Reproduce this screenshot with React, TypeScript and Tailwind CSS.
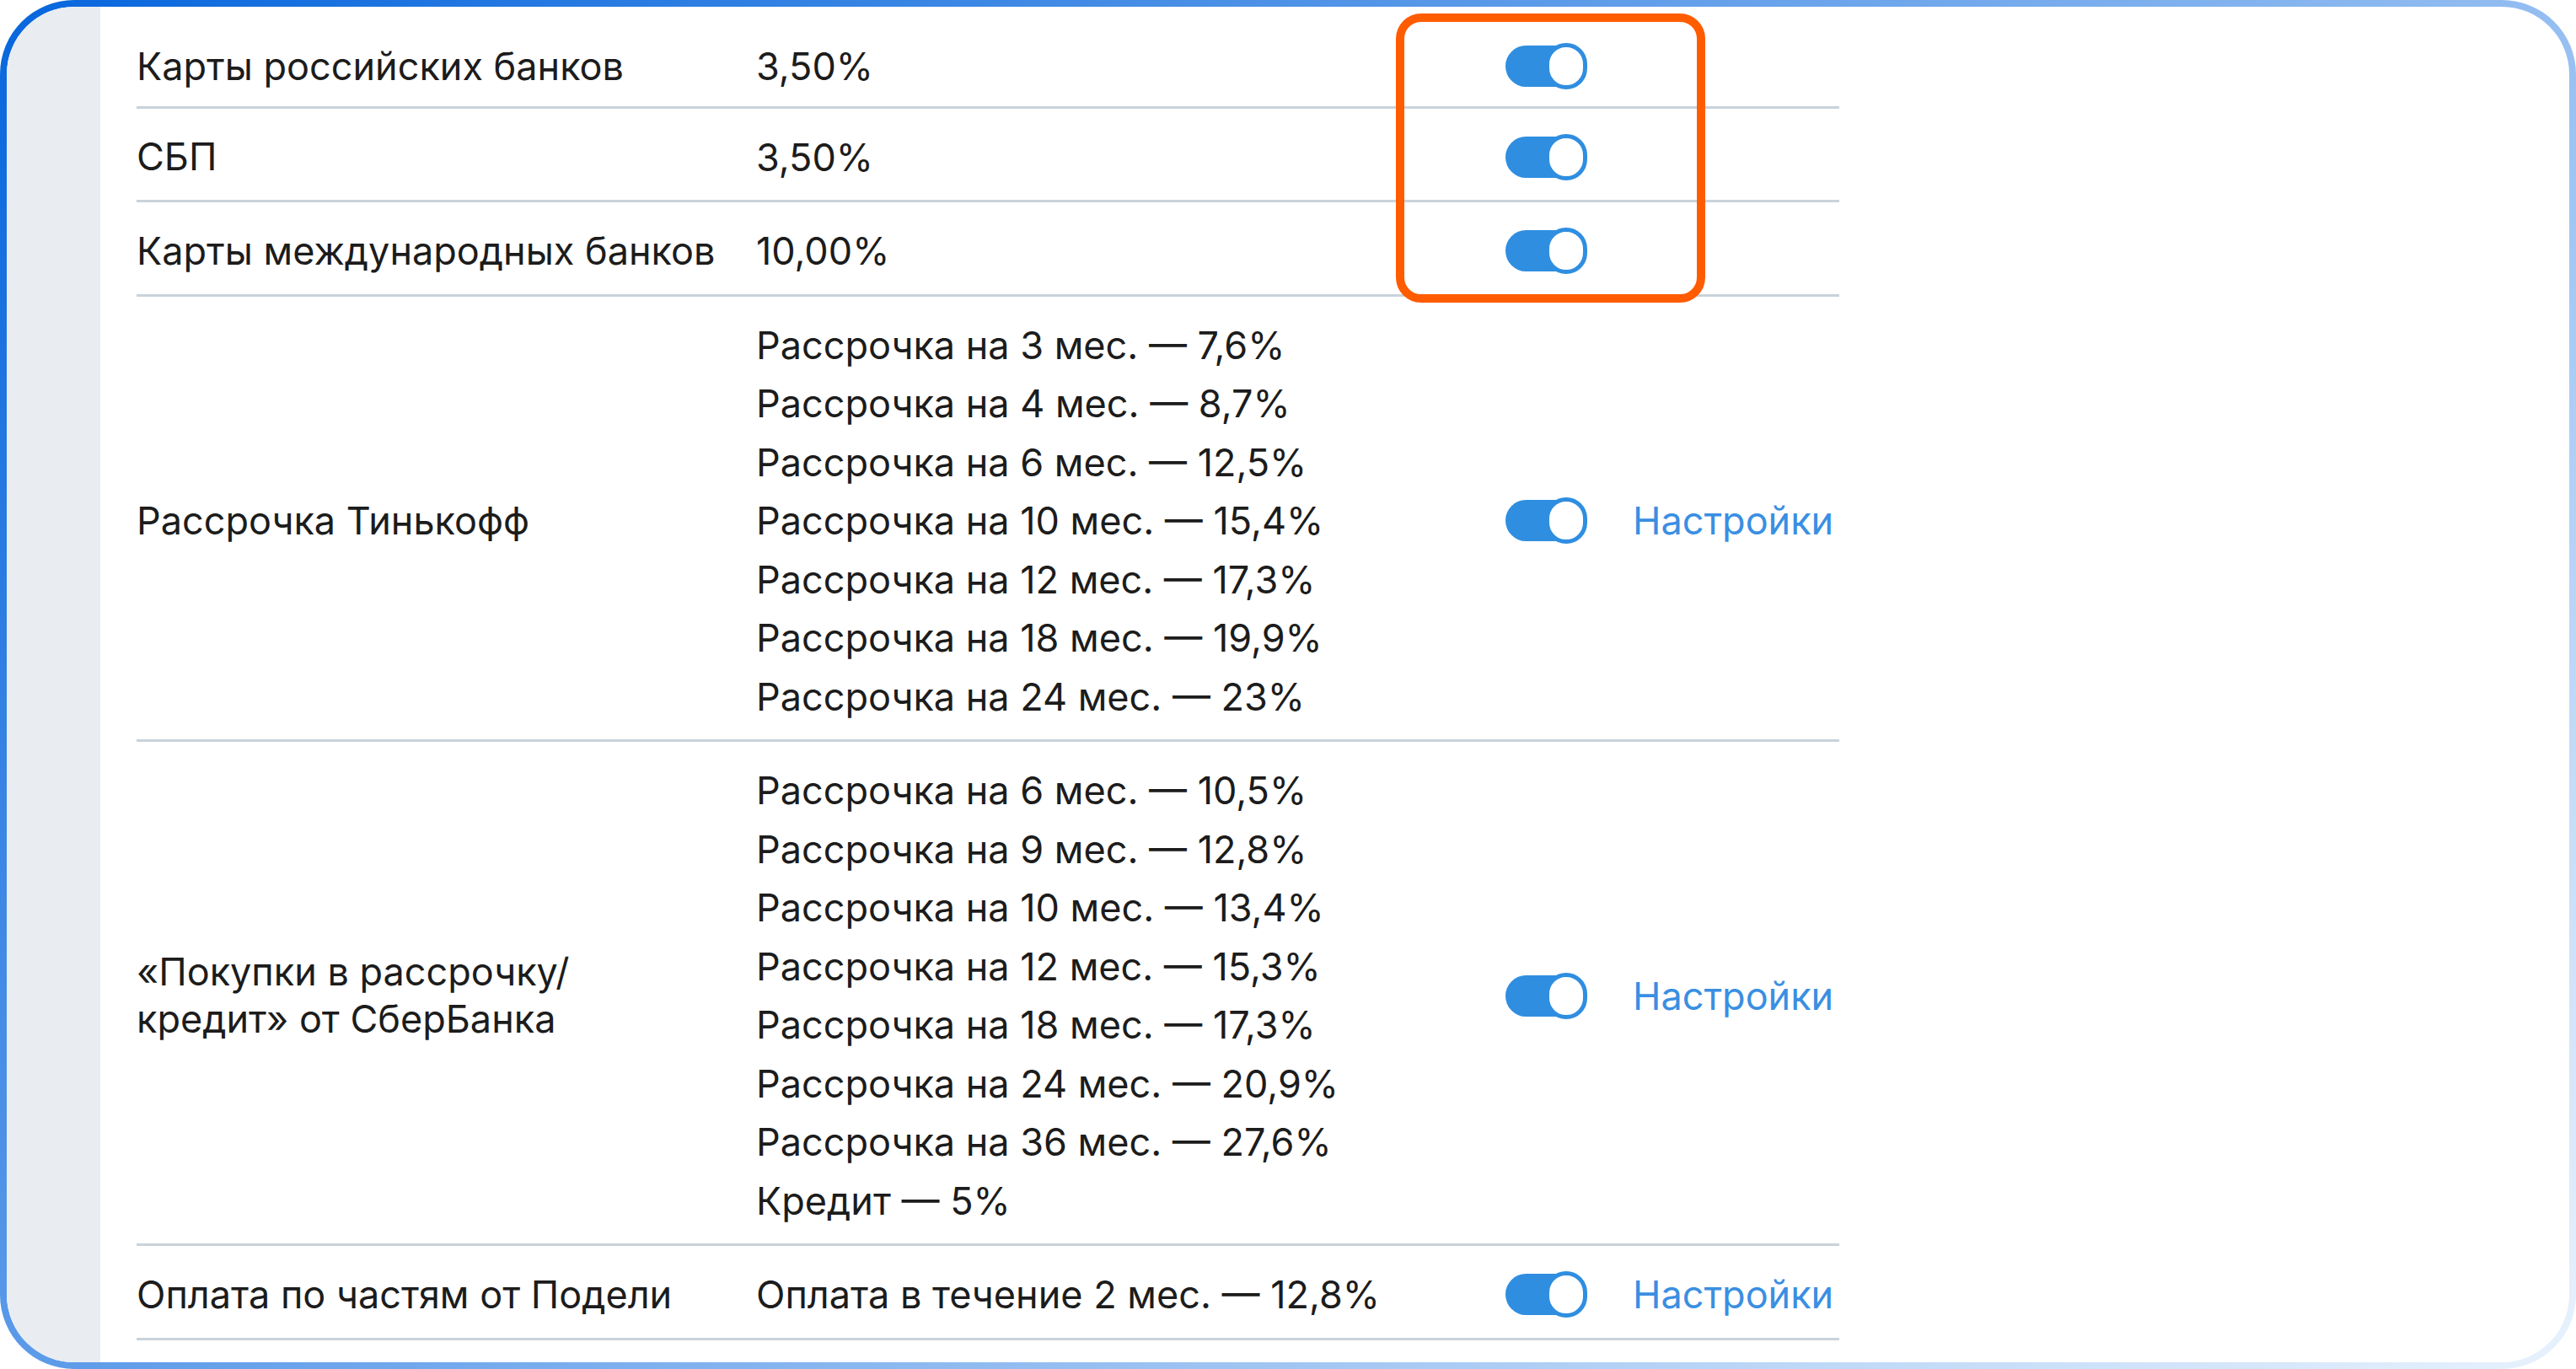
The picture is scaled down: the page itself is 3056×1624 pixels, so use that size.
import React from "react";

type Row = {
  label: React.ReactNode;
  values: string[];
  settings?: boolean;
};

const rows: Row[] = [
  { label: "Карты российских банков", values: ["3,50%"] },
  { label: "СБП", values: ["3,50%"] },
  { label: "Карты международных банков", values: ["10,00%"] },
  {
    label: "Рассрочка Тинькофф",
    values: [
      "Рассрочка на 3 мес. — 7,6%",
      "Рассрочка на 4 мес. — 8,7%",
      "Рассрочка на 6 мес. — 12,5%",
      "Рассрочка на 10 мес. — 15,4%",
      "Рассрочка на 12 мес. — 17,3%",
      "Рассрочка на 18 мес. — 19,9%",
      "Рассрочка на 24 мес. — 23%",
    ],
    settings: true,
  },
  {
    label: (
      <>
        «Покупки в рассрочку/
        <br />
        кредит» от СберБанка
      </>
    ),
    values: [
      "Рассрочка на 6 мес. — 10,5%",
      "Рассрочка на 9 мес. — 12,8%",
      "Рассрочка на 10 мес. — 13,4%",
      "Рассрочка на 12 мес. — 15,3%",
      "Рассрочка на 18 мес. — 17,3%",
      "Рассрочка на 24 мес. — 20,9%",
      "Рассрочка на 36 мес. — 27,6%",
      "Кредит — 5%",
    ],
    settings: true,
  },
  {
    label: "Оплата по частям от Подели",
    values: ["Оплата в течение 2 мес. — 12,8%"],
    settings: true,
  },
];

function Toggle() {
  return (
    <div className="relative h-[55px] w-[97px]">
      <div className="absolute left-0 top-[3px] h-[49px] w-[88px] rounded-full bg-[#2f8ee0]" />
      <div className="absolute right-0 top-0 h-[55px] w-[50px] rounded-full border-[5px] border-[#2f8ee0] bg-white" />
    </div>
  );
}

export default function App() {
  return (
    <div className="h-[1624px] w-[3056px] bg-white font-['Inter',sans-serif]">
      <div className="h-full w-full rounded-[88px] bg-linear-[138deg] from-[#0766dd] to-[#e8f2fd] p-[8px]">
        <div className="flex h-full w-full overflow-hidden rounded-[80px] bg-white">
          {/* sidebar strip */}
          <div className="w-[111px] shrink-0 bg-[#e9edf1]" />

          <div className="relative ml-[43px] mt-[9px] w-[2020px]">
            {rows.map((row, i) => (
              <div
                key={i}
                className={`grid grid-cols-[735px_889px_151px_1fr] items-center border-b-[3px] border-[#c9d3da] text-[45px] text-[#1c1c1c] ${
                  i === 0 ? "pt-[27px] pb-[12px]" : "pt-[23px] pb-[16px]"
                }`}
              >
                <div className="leading-[56px]">{row.label}</div>
                <div className="leading-[69.5px]">
                  {row.values.map((v) => (
                    <div key={v}>{v}</div>
                  ))}
                </div>
                <div>
                  <Toggle />
                </div>
                <div className="leading-[69px] text-[#3a8fe2]">
                  {row.settings ? "Настройки" : null}
                </div>
              </div>
            ))}

            {/* highlight box */}
            <div className="pointer-events-none absolute left-[1494px] top-[-1px] h-[343px] w-[367px] rounded-[30px] border-[10px] border-[#ff5c00]" />
          </div>
        </div>
      </div>
    </div>
  );
}
